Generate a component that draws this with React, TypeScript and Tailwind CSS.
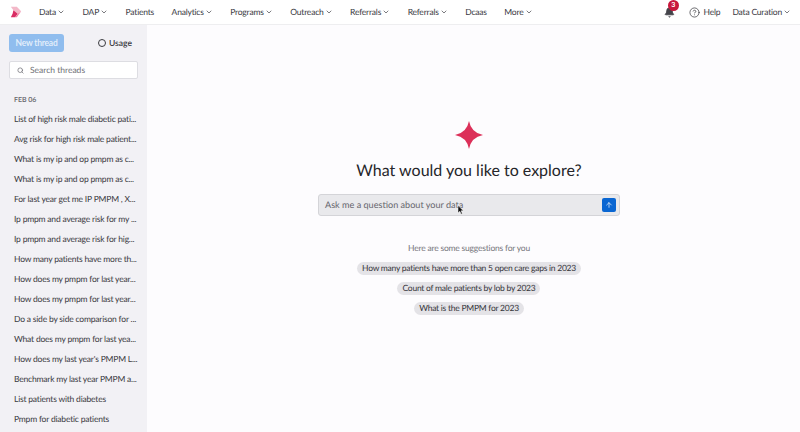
import { ChevronDown, Search, Bell, CircleHelp, ArrowUp } from "lucide-react";

const nav: [string, boolean][] = [
  ["Data", true], ["DAP", true], ["Patients", false], ["Analytics", true], ["Programs", true],
  ["Outreach", true], ["Referrals", true], ["Referrals", true], ["Dcaas", false], ["More", true],
];
const threads = [
  "List of high risk male diabetic pati...",
  "Avg risk for high risk male patient...",
  "What is my ip and op pmpm as c...",
  "What is my ip and op pmpm as c...",
  "For last year get me IP PMPM , X...",
  "Ip pmpm and average risk for my ...",
  "Ip pmpm and average risk for hig...",
  "How many patients have more th...",
  "How does my pmpm for last year...",
  "How does my pmpm for last year...",
  "Do a side by side comparison for ...",
  "What does my pmpm for last yea...",
  "How does my last year's PMPM L...",
  "Benchmark my last year PMPM a...",
  "List patients with diabetes",
  "Pmpm for diabetic patients",
];
const suggestions = [
  "How many patients have more than 5 open care gaps in 2023",
  "Count of male patients by lob by 2023",
  "What is the PMPM for 2023",
];

export default function App() {
  return (
    <div className="flex h-[432px] w-[800px] flex-col overflow-hidden bg-[#fdfcfe] font-['Lato','Noto_Sans',sans-serif] text-[#3a3a3f] [text-rendering:geometricPrecision]">
      <header className="flex h-[25px] shrink-0 items-center border-b border-[#eeeef0] bg-white pl-[10px] pr-[9px] text-[8.5px] tracking-[-0.2px]">
        <svg viewBox="0 0 14 14" className="mr-[17px] h-[12px] w-[12px] shrink-0">
          <polygon points="1,1 8,1 13,6 9,9 4,5" fill="#f3b8c8" />
          <polygon points="4,5 9,9 6,13 1,13 3,9" fill="#d92c63" />
          <polygon points="9,9 13,6 8,13 6,13" fill="#ee7fa0" />
        </svg>
        <nav className="flex items-center gap-[17.5px]">
          {nav.map(([label, chevron], i) => (
            <span key={i} className="flex items-center gap-[1px]">
              {label}
              {chevron && <ChevronDown className="h-[8px] w-[8px]" strokeWidth={2} />}
            </span>
          ))}
        </nav>
        <div className="ml-auto flex items-center">
          <span className="relative mr-[14px] flex">
            <Bell className="h-[11px] w-[11px] fill-[#44444a] text-[#44444a]" />
            <span className="absolute -top-[7px] left-[4px] flex h-[11px] w-[11px] items-center justify-center rounded-full bg-[#c8173c] text-[7px] font-bold text-white">3</span>
          </span>
          <CircleHelp className="mr-[4px] h-[11px] w-[11px]" strokeWidth={1.6} />
          <span>Help</span>
          <span className="ml-[12px] flex items-center gap-[1px]">
            Data Curation
            <ChevronDown className="h-[8px] w-[8px]" strokeWidth={2} />
          </span>
        </div>
      </header>
      <div className="flex min-h-0 flex-1">
        <aside className="w-[147px] shrink-0 overflow-hidden bg-[#f2f1f5] pl-[9px] pr-[9px] pt-[9px]">
          <div className="flex items-center justify-between pr-[6px]">
            <button className="h-[18px] w-[55px] rounded-[3px] bg-[#90bdee] text-[8.5px] font-semibold tracking-[-0.2px] text-[#e6f0fb]">New thread</button>
            <span className="flex items-center gap-[3px] text-[8.5px] font-semibold">
              <span className="h-[8px] w-[8px] rounded-full border border-[#3a3a3f]" />
              Usage
            </span>
          </div>
          <div className="mt-[9px] flex h-[18px] w-[129px] items-center gap-[6px] rounded-[2px] border border-[#dddde2] bg-white pl-[7px] text-[8.5px] text-[#707076]">
            <Search className="h-[7px] w-[7px]" strokeWidth={2.5} />
            Search threads
          </div>
          <div className="mb-[8px] mt-[16px] pl-[5px] text-[7px] font-semibold leading-[10px] text-[#66666c]">FEB 06</div>
          <ul className="flex flex-col gap-[8px] pl-[5px]">
            {threads.map((t, i) => (
              <li key={i} className="whitespace-nowrap text-[8.5px] leading-[12px] tracking-[-0.2px]">{t}</li>
            ))}
          </ul>
        </aside>
        <main className="flex flex-1 flex-col items-center pr-[9px] pt-[96px]">
          <svg viewBox="0 0 28 28" className="h-[28px] w-[28px]">
            <path d="M14 0 Q16.2 11.8 28 14 Q16.2 16.2 14 28 Q11.8 16.2 0 14 Q11.8 11.8 14 0 Z" fill="#dc3059" />
          </svg>
          <h1 className="mt-[10px] text-[16px] leading-[24px] text-[#26262a]">What would you like to explore?</h1>
          <div className="relative mt-[11px] flex h-[22px] w-[302px] items-center justify-between rounded-[3px] border border-[#d4d4d8] bg-[#e9e9ec] pl-[6px] pr-[3px] text-[9.1px] text-[#66666c]">
            <span>Ask me a question about your data</span>
            <span className="flex h-[14px] w-[14px] items-center justify-center rounded-[2px] bg-[#0a66d2]">
              <ArrowUp className="h-[8px] w-[8px] text-white" strokeWidth={2} />
            </span>
            <svg viewBox="0 0 8 12" className="absolute left-[138px] top-[10px] h-[10px] w-[7px]">
              <path d="M1 0.5 L1 9.5 L3.2 7.6 L4.8 11 L6.2 10.3 L4.7 7 L7.5 7 Z" fill="#111" stroke="#fff" strokeWidth="0.6" />
            </svg>
          </div>
          <p className="mt-[26px] text-[8.5px] leading-[12px] tracking-[-0.2px] text-[#76767c]">Here are some suggestions for you</p>
          <div className="mt-[8px] flex flex-col items-center gap-[7px]">
            {suggestions.map((s) => (
              <span key={s} className="flex h-[13px] items-center rounded-full bg-[#e4e3e7] px-[5px] text-[8.5px] tracking-[-0.25px] text-[#36363b]">{s}</span>
            ))}
          </div>
        </main>
      </div>
    </div>
  );
}
